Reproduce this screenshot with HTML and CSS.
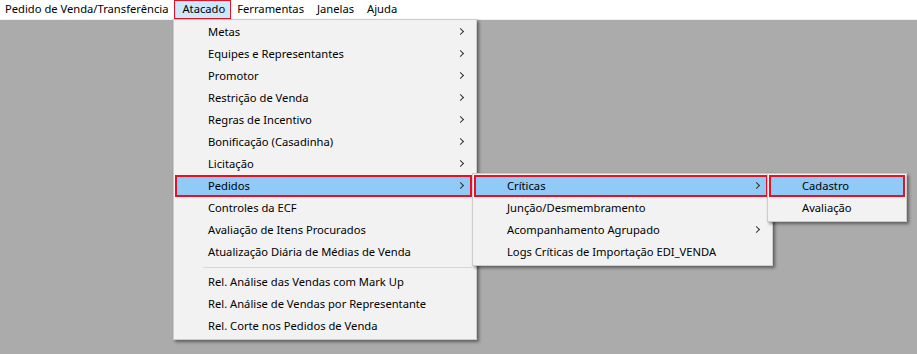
FILE: index.html
```html
<!DOCTYPE html>
<html>
  <head>
    <title>Atacado</title>
    <link rel="stylesheet" href="styles.css">
  </head>
  <body>
    <div class="menubar">
      <div class="bar-item">Pedido de Venda/Transferência</div>
      <div class="bar-item active">Atacado</div>
      <div class="bar-item">Ferramentas</div>
      <div class="bar-item">Janelas</div>
      <div class="bar-item">Ajuda</div>
    </div>

    <div class="desktop">
      <div class="menu menu-main">
        <div class="item sub">Metas</div>
        <div class="item sub">Equipes e Representantes</div>
        <div class="item sub">Promotor</div>
        <div class="item sub">Restrição de Venda</div>
        <div class="item sub">Regras de Incentivo</div>
        <div class="item sub">Bonificação (Casadinha)</div>
        <div class="item sub">Licitação</div>
        <div class="item sub selected">Pedidos</div>
        <div class="item">Controles da ECF</div>
        <div class="item">Avaliação de Itens Procurados</div>
        <div class="item">Atualização Diária de Médias de Venda</div>
        <div class="separator"></div>
        <div class="item">Rel. Análise das Vendas com Mark Up</div>
        <div class="item">Rel. Análise de Vendas por Representante</div>
        <div class="item">Rel. Corte nos Pedidos de Venda</div>
      </div>

      <div class="menu menu-pedidos">
        <div class="item sub selected">Críticas</div>
        <div class="item">Junção/Desmembramento</div>
        <div class="item sub">Acompanhamento Agrupado</div>
        <div class="item">Logs Críticas de Importação EDI_VENDA</div>
      </div>

      <div class="menu menu-criticas">
        <div class="item selected">Cadastro</div>
        <div class="item">Avaliação</div>
      </div>
    </div>
  </body>
</html>
```

FILE: styles.css
```css
body {
  margin: 0;
  width: 917px;
  height: 354px;
  overflow: hidden;
  background-color: #ababab;
  font-family: "Noto Sans", "Open Sans", sans-serif;
  font-size: 11.2px;
  color: #000;
}

.menubar {
  display: flex;
  height: 19px;
  background-color: #fff;
  border-bottom: 1px solid #f0f0f0;
}

.bar-item {
  box-sizing: border-box;
  height: 19px;
  line-height: 16px;
  padding: 0 6px 0 5px;
  border: 1px solid transparent;
}

.bar-item:first-child {
  padding: 0 5px 0 4px;
}

.bar-item.active {
  background-color: #cce8ff;
  border-color: #e81123;
  padding: 0 5px 0 7px;
}

.desktop {
  position: relative;
}

.menu {
  position: absolute;
  box-sizing: border-box;
  background-color: #f2f2f2;
  border: 1px solid #cccccc;
  padding: 1px 4px 2px 1px;
  box-shadow: 2px 2px 3px rgba(0, 0, 0, 0.45);
}

.menu-main {
  left: 173px;
  top: -1px;
  width: 304px;
}

.menu-pedidos {
  left: 472px;
  top: 153px;
  width: 301px;
}

.menu-criticas {
  left: 767px;
  top: 153px;
  width: 140px;
  padding-right: 1px;
}

.item {
  position: relative;
  box-sizing: border-box;
  height: 22px;
  line-height: 17px;
  padding-left: 31px;
  border: 2px solid transparent;
  white-space: nowrap;
}

.item.sub::after {
  content: "";
  position: absolute;
  right: 7px;
  top: 6px;
  width: 4px;
  height: 4px;
  border-top: 1px solid #333;
  border-right: 1px solid #333;
  transform: rotate(45deg);
}

.item.selected {
  background-color: #91c9f7;
  border-color: #e81123;
}

.separator {
  height: 1px;
  margin: 4px 0 3px 28px;
  background-color: #d7d7d7;
}
```
